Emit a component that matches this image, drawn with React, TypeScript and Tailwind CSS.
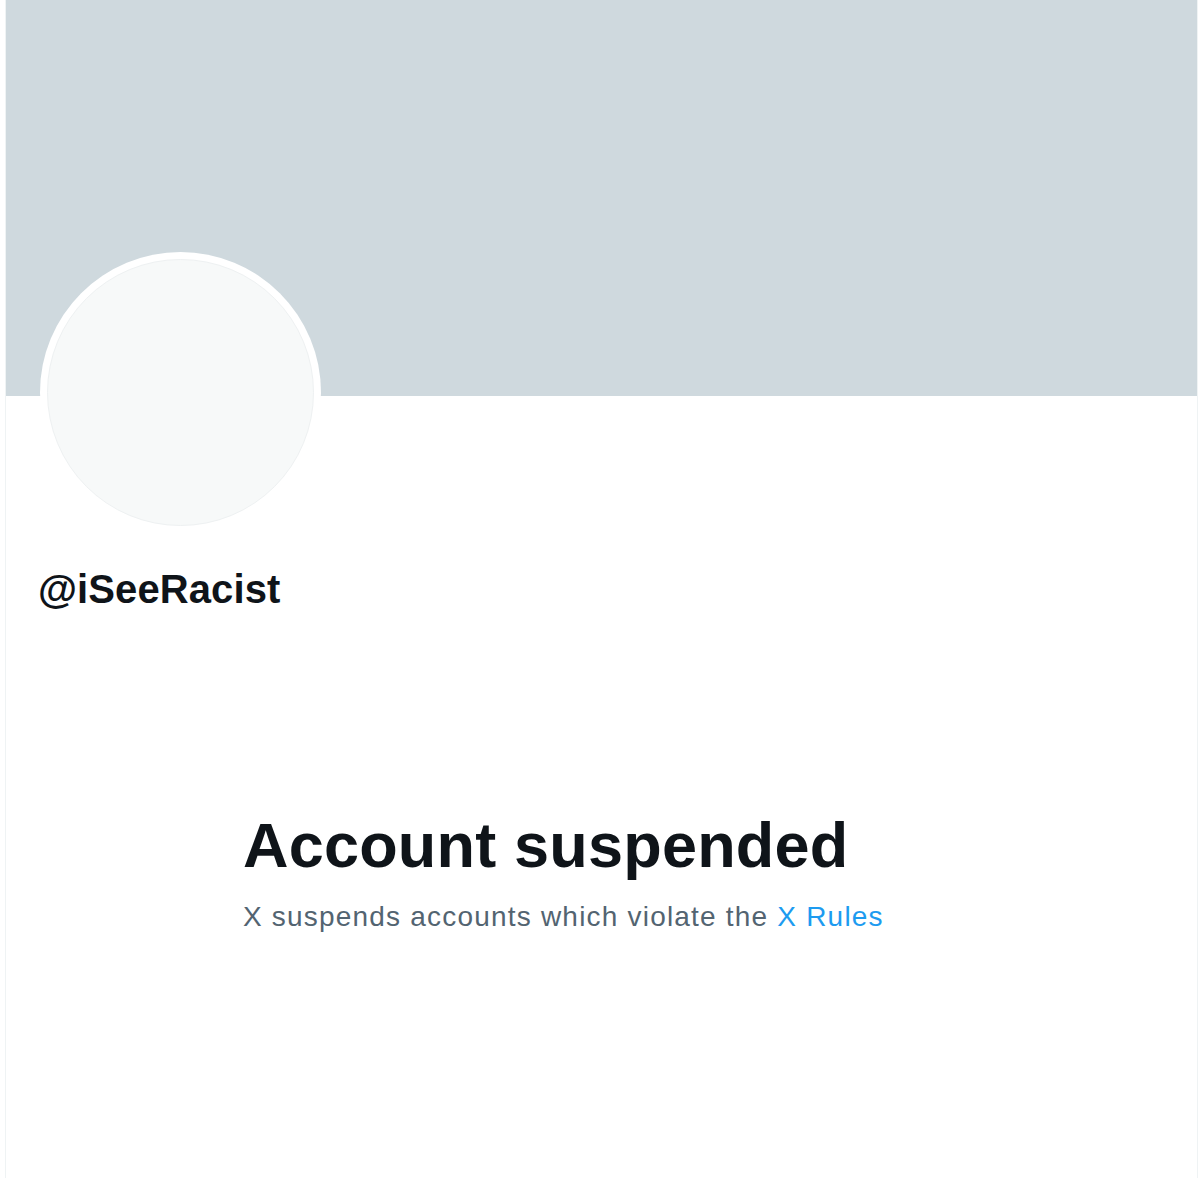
export default function App() {
  return (
    <div className="min-h-[1178px] bg-white font-['Liberation_Sans',Arial,sans-serif]">
      <div className="ml-[5px] w-[1193px] min-h-[1178px] border-x border-[#eff3f4]">
        <div className="h-[396px] w-full bg-[#cfd9de]" />
        <div className="pl-[32px]">
          <div className="-mt-[144px] ml-[2px] h-[281px] w-[281px] rounded-full bg-white p-[7px]">
            <div className="h-full w-full rounded-full border border-[#eef1f2] bg-[#f7f9f9]" />
          </div>
          <h2 className="mt-[32px] text-[40px] font-bold leading-[48px] tracking-[0.1px] text-[#0f1419]">
            @iSeeRacist
          </h2>
        </div>
        <div className="mt-[194px] pl-[237px]">
          <h1 className="text-[63px] font-bold leading-[76px] tracking-[0.2px] text-[#0f1419]">
            Account suspended
          </h1>
          <p className="mt-[16px] text-[28px] leading-[36px] tracking-[1.2px] text-[#536471]">
            X suspends accounts which violate the{" "}
            <a href="#" className="text-[#1d9bf0]">
              X Rules
            </a>
          </p>
        </div>
      </div>
    </div>
  );
}
